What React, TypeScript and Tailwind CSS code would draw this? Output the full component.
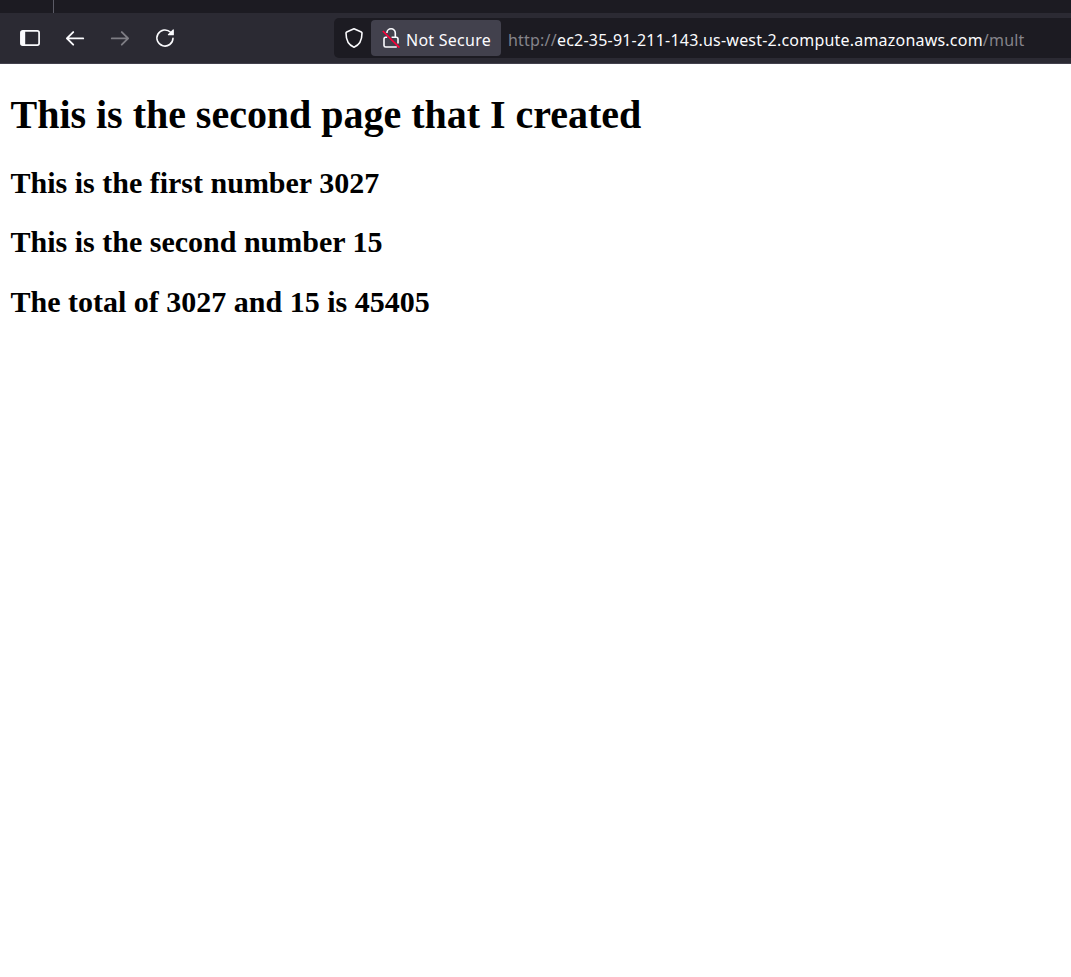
function SidebarIcon() {
  return (
    <svg width="20" height="20" viewBox="0 0 20 20" fill="none" className="shrink-0">
      <rect x="0.9" y="2.9" width="18.2" height="14.2" rx="1.8" stroke="#fbfbfe" strokeWidth="1.7" />
      <path d="M1 3h4.2v14H1z" fill="#fbfbfe" />
    </svg>
  );
}

function ArrowIcon({ className }: { className: string }) {
  return (
    <svg width="20" height="20" viewBox="0 0 20 20" fill="none" className={className}>
      <path
        d="M18.2 10.4H2M8.2 4.1L1.9 10.4L8.2 16.7"
        stroke="currentColor"
        strokeWidth="1.9"
        strokeLinecap="round"
        strokeLinejoin="round"
      />
    </svg>
  );
}

function ReloadIcon() {
  return (
    <svg width="20" height="20" viewBox="0 0 20 20" fill="none" className="shrink-0">
      <path
        d="M18 10.2A8.05 8.05 0 1 1 15.6 4.3"
        stroke="#fbfbfe"
        strokeWidth="1.6"
        strokeLinecap="round"
      />
      <path d="M18.9 1.8V6.7a.5.5 0 0 1-.5.5H13.1Q12.6 6.8 13 6.3L17.9 1.5Q18.6 1 18.9 1.8Z" fill="#fbfbfe" />
    </svg>
  );
}

function ShieldIcon() {
  return (
    <svg width="20" height="20" viewBox="0 0 20 20" fill="none" className="shrink-0">
      <path
        d="M10 .8L17.3 4Q18 4.3 18 5.1C18 10.5 16.6 16.8 10 19.2C3.4 16.8 2 10.5 2 5.1Q2 4.3 2.7 4Z"
        stroke="#fbfbfe"
        strokeWidth="1.6"
        strokeLinejoin="round"
      />
    </svg>
  );
}

function InsecureLockIcon() {
  return (
    <svg width="20" height="20" viewBox="0 0 20 20" fill="none" className="shrink-0">
      <path
        d="M5.9 5A4.2 4.2 0 0 1 14.3 5V9.3H15.3Q17 9.3 17 11V15.5M10.6 9.3H14.3M6.2 9.3H4.7Q3 9.3 3 11V17.4Q3 19 4.7 19H15.8"
        stroke="#fbfbfe"
        strokeWidth="1.6"
      />
      <path d="M1.8 3L18.4 19.6" stroke="#ff0039" strokeWidth="1.7" />
    </svg>
  );
}

export default function App() {
  return (
    <div className="flex h-[977px] w-full flex-col overflow-hidden bg-white">
      <div className="flex h-[13px] shrink-0 bg-[#1c1b22]">
        <div className="w-[54px] border-r border-[#5b5b66]" />
      </div>
      <header className="flex h-[51px] shrink-0 border-b border-[#42414d] bg-[#2b2a33] font-['Noto_Sans',sans-serif] text-[16px]">
        <nav className="flex w-[334px] shrink-0 items-center gap-[25px] pl-5">
          <SidebarIcon />
          <ArrowIcon className="shrink-0 text-[#fbfbfe]" />
          <ArrowIcon className="shrink-0 -scale-x-100 text-[#7e7d84]" />
          <ReloadIcon />
        </nav>
        <div className="mt-[5px] flex h-10 flex-1 items-center rounded-l-[5px] bg-[#1c1b22] pl-[10px]">
          <ShieldIcon />
          <div className="ml-[7px] flex h-9 w-[130px] shrink-0 items-center rounded bg-[#42414d] pl-[10px] text-[#fbfbfe]">
            <InsecureLockIcon />
            <span className="ml-[5px] whitespace-nowrap pt-[3px] leading-6 tracking-[0.25px]">Not Secure</span>
          </div>
          <div className="ml-[7px] whitespace-nowrap pt-[3px] leading-6 tracking-[0.21px] text-[#85848a]">
            <span>http://</span>
            <span className="text-[#fbfbfe]">ec2-35-91-211-143.us-west-2.compute.amazonaws.com</span>
            <span>/mult</span>
          </div>
        </div>
      </header>
      <main className="flex flex-col whitespace-nowrap pl-[10.5px] pt-[28px] font-['Liberation_Serif',serif] font-bold text-black">
        <h1 className="text-[40px] leading-[46px] tracking-[-0.02px]">This is the second page that I created</h1>
        <h2 className="mt-[28px] text-[30px] leading-[34px]">This is the first number 3027</h2>
        <h2 className="mt-[25px] text-[30px] leading-[34px]">This is the second number 15</h2>
        <h2 className="mt-[26px] text-[30px] leading-[34px]">The total of 3027 and 15 is 45405</h2>
      </main>
    </div>
  );
}
